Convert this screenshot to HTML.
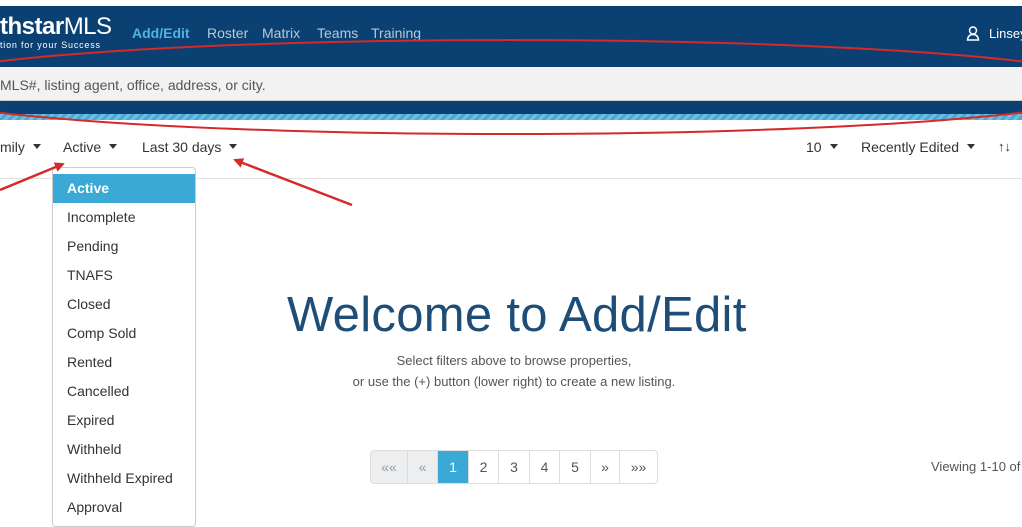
<!DOCTYPE html>
<html><head><meta charset="utf-8"><style>
*{margin:0;padding:0;box-sizing:border-box}
body{width:1022px;height:511px;overflow:hidden;background:#fff;font-family:"Liberation Sans",sans-serif;position:relative;color:#333}
.abs{position:absolute}
.nav{top:6px;left:0;width:1022px;height:61px;background:#0b4172}
.search{top:67px;left:0;width:1022px;height:34px;background:#f2f2f2;border-bottom:1px solid #ccc}
.nav2{top:101px;left:0;width:1022px;height:13px;background:#0b4172}
.stripe{top:114px;left:0;width:1022px;height:6px;background:repeating-linear-gradient(135deg,#6fbfe0 0 3px,#4aa6d3 3px 6px)}
.t{position:absolute;white-space:nowrap}
.caret{display:inline-block;width:0;height:0;border-left:4px solid transparent;border-right:4px solid transparent;border-top:5px solid #333;vertical-align:middle;margin-left:8px;margin-top:-3px}
.dd{left:52px;top:167px;width:144px;height:360px;border:1px solid #ccc;border-radius:4px;background:#fff;padding-top:6px}
.dd div{height:29px;line-height:29px;padding-left:14px;font-size:14px;color:#333}
.dd .on{background:#3aa9d6;color:#fff;font-weight:bold}
.pg{left:370px;top:450px;height:34px;display:flex;border:1px solid #ddd;border-radius:4px;overflow:hidden}
.pg div{height:32px;line-height:32px;text-align:center;font-size:14px;color:#555;border-right:1px solid #ddd}
</style></head><body>
<div class="abs nav"></div>
<div class="t" style="left:0;top:13px;font-size:24px;font-weight:bold;color:#fff;letter-spacing:-0.5px">thstar<span style="font-weight:normal">MLS</span></div>
<div class="t" style="left:0;top:40px;font-size:9px;color:#fff;letter-spacing:0.8px">tion for your Success</div>
<div class="t" style="left:132px;top:25px;font-size:14px;font-weight:bold;color:#4fb3e3">Add/Edit</div>
<div class="t" style="left:207px;top:25px;font-size:14px;color:#b8c8d8">Roster</div>
<div class="t" style="left:262px;top:25px;font-size:14px;color:#b8c8d8">Matrix</div>
<div class="t" style="left:317px;top:25px;font-size:14px;color:#b8c8d8">Teams</div>
<div class="t" style="left:371px;top:25px;font-size:14px;color:#b8c8d8">Training</div>
<svg class="abs" style="left:966px;top:26px" width="14" height="15" viewBox="0 0 14 15"><circle cx="7" cy="4.5" r="3.5" fill="none" stroke="#fff" stroke-width="1.5"/><path d="M1.5 14 Q2 8.5 7 8.5 Q12 8.5 12.5 14 Z" fill="none" stroke="#fff" stroke-width="1.5"/></svg>
<div class="t" style="left:989px;top:26px;font-size:13px;color:#fff">Linsey</div>
<div class="abs search"></div>
<div class="t" style="left:0;top:77px;font-size:14px;color:#555">MLS#, listing agent, office, address, or city.</div>
<div class="abs nav2"></div>
<div class="abs stripe"></div>
<div class="t" style="left:0;top:139px;font-size:14px">mily<span class="caret"></span></div>
<div class="t" style="left:63px;top:139px;font-size:14px">Active<span class="caret"></span></div>
<div class="t" style="left:142px;top:139px;font-size:14px">Last 30 days<span class="caret"></span></div>
<div class="t" style="left:806px;top:139px;font-size:14px">10<span class="caret"></span></div>
<div class="t" style="left:861px;top:139px;font-size:14px">Recently Edited<span class="caret"></span></div>
<div class="t" style="left:998px;top:139px;font-size:13px">↑↓</div>
<div class="abs" style="left:0;top:178px;width:1022px;height:1px;background:#e2e2e2"></div>
<div class="abs dd">
<div class="on">Active</div><div>Incomplete</div><div>Pending</div><div>TNAFS</div><div>Closed</div><div>Comp Sold</div><div>Rented</div><div>Cancelled</div><div>Expired</div><div>Withheld</div><div>Withheld Expired</div><div>Approval</div>
</div>
<div class="t" style="left:287px;top:287px;font-size:49px;color:#1e4e78;letter-spacing:0.3px">Welcome to Add/Edit</div>
<div class="t" style="left:0;width:1028px;text-align:center;top:350px;font-size:13px;color:#555;line-height:21px">Select filters above to browse properties,<br>or use the (+) button (lower right) to create a new listing.</div>
<div class="abs pg">
<div style="width:37px;background:#eceef0;color:#999">««</div>
<div style="width:30px;background:#eceef0;color:#999">«</div>
<div style="width:31px;background:#3aa9d6;color:#fff">1</div>
<div style="width:30px">2</div><div style="width:31px">3</div><div style="width:30px">4</div><div style="width:31px">5</div>
<div style="width:29px">»</div><div style="width:37px;border-right:none">»»</div>
</div>
<div class="t" style="left:931px;top:459px;font-size:13px;color:#555">Viewing 1-10 of</div>
<svg class="abs" style="left:0;top:0" width="1022" height="511">
<defs><marker id="h" markerWidth="10" markerHeight="10" refX="8" refY="5" orient="auto" markerUnits="userSpaceOnUse"><path d="M0,0 L10,5 L0,10 Z" fill="#d42a2a"/></marker></defs>
<ellipse cx="510" cy="87" rx="610" ry="47" fill="none" stroke="#d42a2a" stroke-width="2"/>
<line x1="0" y1="190" x2="63" y2="164" stroke="#d42a2a" stroke-width="2.5" marker-end="url(#h)"/>
<line x1="352" y1="205" x2="235" y2="160" stroke="#d42a2a" stroke-width="2.5" marker-end="url(#h)"/>
</svg>
</body></html>
